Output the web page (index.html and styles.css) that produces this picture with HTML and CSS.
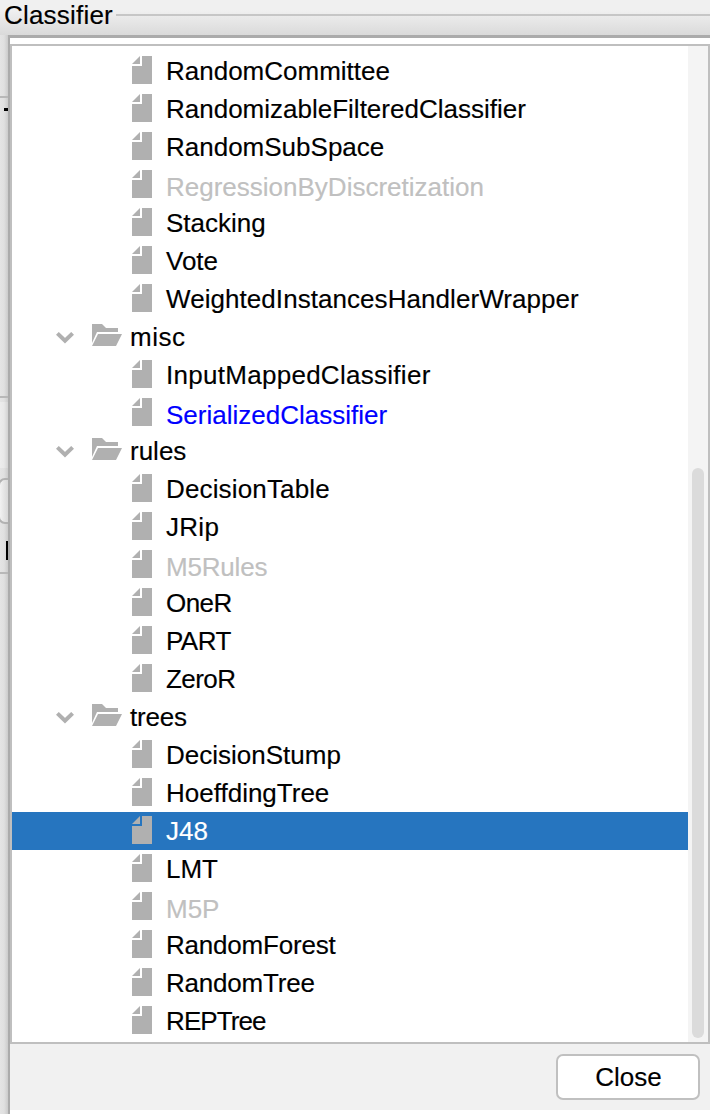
FILE: index.html
```html
<!DOCTYPE html>
<html lang="en">
<head>
<meta charset="utf-8">
<title>Classifier</title>
<link rel="stylesheet" href="styles.css">
</head>
<body>
<svg class="defs" width="0" height="0">
  <symbol id="file" viewBox="0 0 20 28"><path d="M0 8L8 0V8ZM10 0H20V28H0V10H10Z"/></symbol>
  <symbol id="folder" viewBox="0 0 30 22"><path d="M0 0H10L14 4H26V8H5L0 19ZM6 10H30L24 22H0Z"/></symbol>
  <symbol id="chevron" viewBox="0 0 18 12"><path d="M1.4 1.4L9 8.8L16.6 1.4"/></symbol>
</svg>
<div class="window">
  <div class="group-title"><span>Classifier</span></div>
  <div class="behind">
    <div class="edge edge-top"></div>
    <div class="edge dash"></div>
    <div class="edge edge-mid"></div>
    <div class="edge band"></div>
    <div class="edge back-button"></div>
    <div class="edge stem"></div>
    <div class="edge edge-low"></div>
  </div>
  <div class="popup">
    <div class="list">
      <ul class="tree">
        <li class="leaf"><svg><use href="#file"/></svg><span>RandomCommittee</span></li>
        <li class="leaf"><svg><use href="#file"/></svg><span>RandomizableFilteredClassifier</span></li>
        <li class="leaf"><svg><use href="#file"/></svg><span>RandomSubSpace</span></li>
        <li class="leaf disabled"><svg><use href="#file"/></svg><span>RegressionByDiscretization</span></li>
        <li class="leaf"><svg><use href="#file"/></svg><span>Stacking</span></li>
        <li class="leaf"><svg><use href="#file"/></svg><span>Vote</span></li>
        <li class="leaf open-1"><svg><use href="#file"/></svg><span>WeightedInstancesHandlerWrapper</span></li>
        <li class="branch open-4"><svg class="chevron"><use href="#chevron"/></svg><svg class="folder"><use href="#folder"/></svg><span>misc</span></li>
        <li class="leaf open-3"><svg><use href="#file"/></svg><span>InputMappedClassifier</span></li>
        <li class="leaf match"><svg><use href="#file"/></svg><span>SerializedClassifier</span></li>
        <li class="branch"><svg class="chevron"><use href="#chevron"/></svg><svg class="folder"><use href="#folder"/></svg><span>rules</span></li>
        <li class="leaf open-2"><svg><use href="#file"/></svg><span>DecisionTable</span></li>
        <li class="leaf open-3"><svg><use href="#file"/></svg><span>JRip</span></li>
        <li class="leaf disabled tight-1"><svg><use href="#file"/></svg><span>M5Rules</span></li>
        <li class="leaf tight-2"><svg><use href="#file"/></svg><span>OneR</span></li>
        <li class="leaf tight-2"><svg><use href="#file"/></svg><span>PART</span></li>
        <li class="leaf tight-2"><svg><use href="#file"/></svg><span>ZeroR</span></li>
        <li class="branch tight-1"><svg class="chevron"><use href="#chevron"/></svg><svg class="folder"><use href="#folder"/></svg><span>trees</span></li>
        <li class="leaf"><svg><use href="#file"/></svg><span>DecisionStump</span></li>
        <li class="leaf"><svg><use href="#file"/></svg><span>HoeffdingTree</span></li>
        <li class="leaf selected"><svg><use href="#file"/></svg><span>J48</span></li>
        <li class="leaf"><svg><use href="#file"/></svg><span>LMT</span></li>
        <li class="leaf disabled"><svg><use href="#file"/></svg><span>M5P</span></li>
        <li class="leaf tight-1"><svg><use href="#file"/></svg><span>RandomForest</span></li>
        <li class="leaf tight-1"><svg><use href="#file"/></svg><span>RandomTree</span></li>
        <li class="leaf tight-3"><svg><use href="#file"/></svg><span>REPTree</span></li>
      </ul>
      <div class="scrollbar"><div class="thumb"></div></div>
    </div>
    <div class="footer"><button class="close">Close</button></div>
  </div>
</div>
</body>
</html>
```
FILE: styles.css
```css
* { box-sizing: border-box; }
body { margin: 0; background: #fff; color: #000; font: 26px "Liberation Sans", Arial, sans-serif; -webkit-text-stroke: 0.15px; }
.defs { position: absolute; }
.window {
  display: grid; grid-template: 35px 1079px / 8px 702px;
  width: 710px; height: 1114px; overflow: hidden;
  background: linear-gradient(#f0f0f0 10px, #dadada 35px, #e2e2e2 120px);
}
.group-title { grid-column: 1 / 3; display: flex; gap: 3px; padding-left: 4px; line-height: 30px; height: 30px; letter-spacing: 0.2px; }
.group-title::after { content: ""; flex: 1; height: 2px; margin-top: 14px; background: #c6c6c6; }
.behind { background: linear-gradient(90deg, #e4e4e4, #e0e0e0 50%, #cbcbcb); }
.edge { width: 8px; height: 2px; background: #b8b8b8; }
.edge-top { margin-top: 61px; }
.dash { width: 4px; height: 3px; margin: 10px 0 0 4px; background: #000; }
.edge-mid { margin-top: 285px; }
.band { height: 66px; margin-top: 4px; background: linear-gradient(90deg, #ededed, #e8e8e8 50%, #d2d2d2); }
.back-button { height: 46px; margin-top: 10px; border: solid #b2b2b2; border-width: 2px 0 2px 2px; border-radius: 7px 0 0 7px; background: linear-gradient(90deg, #f2f2f2, #d8d8d8); margin-left: -2px; width: 10px; }
.stem { width: 2px; height: 19px; margin: 17px 0 0 6px; background: #000; }
.edge-low { margin-top: 12px; }
.popup { border: solid #ababab; border-width: 3px 0 0 2px; padding-top: 6px; background: #fff; }
.list { display: flex; height: 1000px; border: 2px solid #bfbfbf; background: #fff; }
.tree { flex: 1; margin: 0; padding: 6px 0 0; list-style: none; }
.tree li { display: flex; height: 38px; line-height: 38px; white-space: nowrap; }
.tree svg { width: 20px; height: 28px; margin: 4px 14px 0 0; fill: #b0b0b0; flex: none; }
.leaf { padding-left: 120px; }
.branch { padding-left: 44px; }
.tree .chevron { width: 18px; height: 12px; margin: 14px 18px 0 0; fill: none; stroke: #b0b0b0; stroke-width: 4px; }
.tree .folder { width: 30px; height: 22px; margin: 6px 8px 0 0; }
.disabled span, .match span { padding-top: 2px; }
.disabled { color: #c0c0c0; }
.match { color: #00f; }
.selected { background: #2675bf; color: #fff; }
.open-1 { letter-spacing: 0.06px; }
.open-2 { letter-spacing: 0.15px; }
.open-3 { letter-spacing: 0.28px; }
.open-4 { letter-spacing: 0.55px; }
.tight-1 { letter-spacing: -0.2px; }
.tight-2 { letter-spacing: -0.55px; }
.tight-3 { letter-spacing: -0.9px; }
.scrollbar { width: 20px; padding: 422px 4px 4px; background: #f4f4f4; }
.thumb { width: 12px; height: 570px; border-radius: 6px; background: #dbdbdb; }
.footer { display: flex; justify-content: flex-end; height: 66px; padding: 10px 10px 0 0; background: #f1f1f1; }
.close { width: 144px; height: 46px; padding: 0 0 0 1px; border: 2px solid #c0c0c0; border-radius: 7px; background: #fff; color: #000; font: inherit; }
```
